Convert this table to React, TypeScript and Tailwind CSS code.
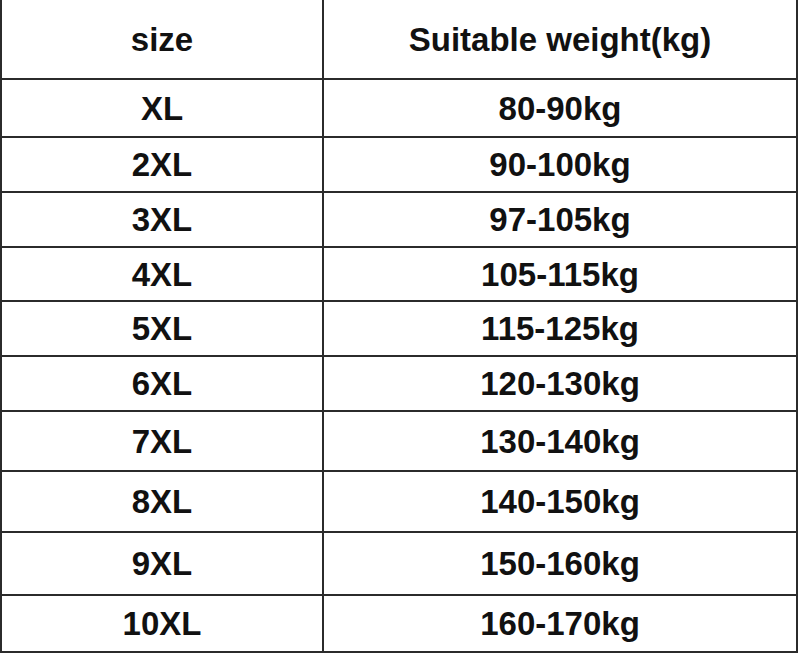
import React from 'react';

const ROWS = [
  { size: 'XL', weight: '80-90kg', h: 'h-[58px]' },
  { size: '2XL', weight: '90-100kg', h: 'h-[55px]' },
  { size: '3XL', weight: '97-105kg', h: 'h-[55px]' },
  { size: '4XL', weight: '105-115kg', h: 'h-[54px]' },
  { size: '5XL', weight: '115-125kg', h: 'h-[55px]' },
  { size: '6XL', weight: '120-130kg', h: 'h-[55px]' },
  { size: '7XL', weight: '130-140kg', h: 'h-[60px]' },
  { size: '8XL', weight: '140-150kg', h: 'h-[61px]' },
  { size: '9XL', weight: '150-160kg', h: 'h-[63px]' },
  { size: '10XL', weight: '160-170kg', h: 'h-[57px]' },
];

const Row = ({ left, right, h }: { left: string; right: string; h: string }) => (
  <div className={`flex border-b-2 border-[#2b2b2b] ${h}`}>
    <div className="w-[322px] border-r-2 border-[#2b2b2b] flex items-center justify-center">
      {left}
    </div>
    <div className="flex-1 flex items-center justify-center">{right}</div>
  </div>
);

export default function App() {
  return (
    <div className="w-[800px] h-[657px] bg-white overflow-hidden">
      <div
        className="w-[798px] border-x-2 border-[#2b2b2b] text-[#111] font-bold text-[33px] leading-none"
        style={{ fontFamily: '"Liberation Sans", Arial, sans-serif' }}
      >
        <Row left="size" right="Suitable weight(kg)" h="h-[80px]" />
        {ROWS.map((r) => (
          <Row key={r.size} left={r.size} right={r.weight} h={r.h} />
        ))}
      </div>
    </div>
  );
}
